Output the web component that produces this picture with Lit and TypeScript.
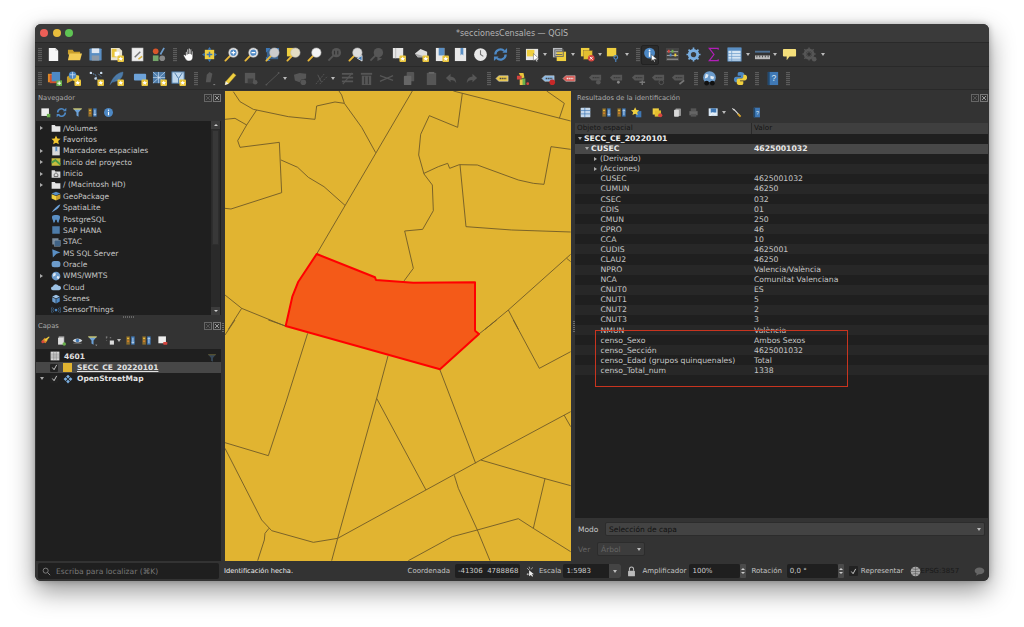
import { LitElement, html, css, svg } from "lit";
import { customElement } from "lit/decorators.js";

const star = svg`<rect x="9" y="9" width="7" height="7" rx="1" fill="#e9c53c"/><path d="M12.5 10l.8 1.7 1.7.2-1.3 1.1.4 1.7-1.6-.9-1.6.9.4-1.7-1.3-1.1 1.7-.2z" fill="#fff"/>`;
const mag = (inner: any = "", glass = "#e8e8e8") => svg`<path d="M7 9L1.5 14.5" stroke="#e9b93a" stroke-width="2" stroke-linecap="round"/><circle cx="10" cy="6" r="5" fill="${glass}" stroke="#bbb" stroke-width=".6"/>${inner}`;
const folder = (c: string) => svg`<path d="M1 3h5l1.5 2H15v9H1z" fill="${c}"/>`;
const dim = "#565656";
const lbl = (c: string, t = "#444") => svg`<path d="M1 8l3-3h10v6H4z" fill="${c}" stroke="#ddd" stroke-width=".5"/><path d="M5 8h7" stroke="${t}" stroke-width="1.6" stroke-dasharray="1.4 .6"/>`;
const dlbl = (extra: any = "") => svg`<path d="M1 7l3-3h10v6H4z" fill="${dim}"/><path d="M5 7h7" stroke="#3a3a3a" stroke-width="1.4" stroke-dasharray="1.4 .6"/>${extra}`;
const bars = (c1: string, c2: string) => svg`<rect x="2" y="2" width="5" height="12" fill="#8a6d2d"/><rect x="3" y="4" width="3" height="2" fill="#e9b93a"/><rect x="3" y="8" width="3" height="2" fill="#d9822b"/><rect x="9" y="2" width="5" height="12" fill="${c1}"/><path d="M11.5 4v8M9.5 ${c2 === "d" ? "10l2 2 2-2" : "6l2-2 2 2"}" stroke="#cfe2f5" stroke-width="1.2" fill="none"/>`;

const I: Record<string, any> = {
  new: svg`<path d="M3 1h7l3 3v11H3z" fill="#f6f6f6"/><path d="M10 1v3h3" fill="#ccc"/>`,
  open: svg`<path d="M1 3h5l1.5 2H14v3H1z" fill="#c99f2c"/><path d="M1 14l1.5-7H16l-2 7z" fill="#f3cc55"/>`,
  save: svg`<rect x="1.5" y="1.5" width="13" height="13" rx="1" fill="#5a8fc4"/><rect x="4" y="1.5" width="8" height="5" fill="#dfe8f2"/><rect x="4" y="9" width="8" height="5.5" fill="#8d9aa8"/>`,
  saveas: svg`<path d="M2 1h9l3 3v10H2z" fill="#e9e3cf"/><rect x="3" y="2" width="5" height="9" fill="#e9c53c"/><rect x="6" y="5" width="5" height="5" fill="#fff"/>${star}`,
  layout: svg`<rect x="2" y="1" width="12" height="14" fill="#eee" stroke="#999" stroke-width=".5"/><path d="M5 11l6-6" stroke="#777" stroke-width="1.6"/><path d="M9 13l4-3" stroke="#d6b13c" stroke-width="1.6"/>`,
  style: svg`<circle cx="5" cy="4.5" r="3" fill="#d9562b"/><path d="M10 8l4-7" stroke="#6d9ccb" stroke-width="1.8"/><rect x="2" y="9" width="6" height="6" fill="#74a56a"/><circle cx="12" cy="12" r="3" fill="#888"/>`,
  hand: svg`<path d="M4 9V5.5c0-1 1.4-1 1.5 0V8V3c0-1 1.5-1 1.5 0v4.5V2.2c0-1 1.6-1 1.6 0v5.3V3c0-1 1.5-1 1.5 0v5V5c0-1 1.4-1 1.4 0v6c0 2.500-1.500 4-4 4-2 0-3-1-4-2.500L1.800 9.500c-.6-1 .6-1.800 1.300-1z" fill="#fff" stroke="#222" stroke-width=".5"/>`,
  pansel: svg`<rect x="3" y="3" width="10" height="10" fill="#efcf3f"/><path d="M8 0l2 3H6zM8 16l-2-3h4zM0 8l3-2v4zM16 8l-3 2V6z" fill="#3f78b5"/><path d="M8 5v6M5 8h6" stroke="#3f78b5" stroke-width="1.6"/>`,
  zin: mag(svg`<circle cx="10" cy="6" r="3.300" fill="#4d88c4"/><path d="M8 6h4M10 4v4" stroke="#fff" stroke-width="1.100"/>`),
  zout: mag(svg`<circle cx="10" cy="6" r="3.300" fill="#4d88c4"/><path d="M8 6h4" stroke="#fff" stroke-width="1.200"/>`),
  zfull: svg`<path d="M1 1h5L1 6zM15 1v5l-5-5zM1 15v-5l5 5z" fill="#3f78b5"/><rect x="2" y="2" width="12" height="11" fill="#3f78b5" opacity=".7"/>${mag("", "#ccc")}`,
  zsel: svg`<rect x="1" y="1" width="7" height="9" fill="#efcf3f"/>${mag("", "#e3dcc3")}`,
  zlayer: mag("", "#f3f3f3"),
  znat: svg`<path d="M7 9L1.500 14.500" stroke="${dim}" stroke-width="2"/><circle cx="10" cy="6" r="5" fill="${dim}"/><path d="M8 4v4M11.500 4v4" stroke="#333" stroke-width="1.200"/>`,
  zlast: svg`${mag("", "#ddd")}<path d="M15 9l-5 3 5 3z" fill="#3f78b5" stroke="#fff" stroke-width=".8"/>`,
  znext: svg`<path d="M7 9L1.500 14.500" stroke="${dim}" stroke-width="2"/><circle cx="10" cy="6" r="5" fill="${dim}"/><path d="M9 10l5 2.500-5 2.500z" fill="${dim}"/>`,
  view: svg`<path d="M2 1h11v11H2z" fill="#e6e6e6"/><path d="M5 1v11" stroke="#bbb"/>${star}`,
  view3d: svg`<path d="M1 7l6-5 7 3v6H4z" fill="#ddd"/><path d="M1 7l3 4h10" fill="#aaa"/>${star}`,
  bm: svg`<rect x="2" y="1" width="9" height="14" fill="#e8e8e8"/><rect x="5" y="1" width="6" height="8" fill="#5a8fc4"/>${star}`,
  bm2: svg`<rect x="2" y="1" width="12" height="14" fill="#e8e8e8"/><path d="M8 1v8l1.500-1.500L11 9V1z" fill="#5a8fc4"/>`,
  clock: svg`<circle cx="8" cy="8" r="6.800" fill="#e8e8e8"/><path d="M8 3.500V8l3 2" stroke="#777" stroke-width="1.200" fill="none"/>`,
  refresh: svg`<path d="M2.500 8a5.500 5.500 0 0 1 9.500-3.700M13.500 8a5.500 5.500 0 0 1-9.500 3.700" stroke="#4d88c4" stroke-width="2.400" fill="none"/><path d="M10 6h5V1zM6 10H1v5z" fill="#4d88c4"/>`,
  select: svg`<rect x="1" y="2" width="13" height="12" fill="#e8e8e8"/><rect x="2" y="3" width="8" height="7" fill="#efcf3f"/><path d="M9 7v8l2-2 1.500 3 1-.5-1.500-3h3z" fill="#fff" stroke="#222" stroke-width=".4"/>`,
  attr: svg`<rect x="1" y="1" width="10" height="10" fill="#b9bcc0"/><rect x="5" y="5" width="10" height="10" fill="#efcf3f"/><rect x="3" y="3" width="9" height="7" fill="none" stroke="#666"/><path d="M4 5h7M4 8h7" stroke="#666"/>`,
  desel: svg`<rect x="1" y="1" width="9" height="9" fill="#efcf3f"/><rect x="4" y="4" width="9" height="9" fill="#e3be30" stroke="#8a6d2d" stroke-width=".5"/><circle cx="12" cy="12" r="3.500" fill="#d6453f"/><path d="M10.500 10.500l3 3M13.500 10.500l-3 3" stroke="#fff"/>`,
  value: svg`<rect x="2" y="1" width="10" height="9" fill="#efcf3f"/><circle cx="11.500" cy="11" r="2" fill="none" stroke="#4d88c4" stroke-width="1.200"/><path d="M11.500 13v3" stroke="#4d88c4" stroke-width="1.200"/>`,
  id: svg`<circle cx="7" cy="6.500" r="5.800" fill="#4d88c4"/><rect x="6.200" y="5.500" width="1.600" height="5" fill="#fff"/><circle cx="7" cy="3.700" r="1" fill="#fff"/><path d="M9 8v7l1.800-1.600 1.300 2.600.9-.4-1.200-2.600H15z" fill="#fff" stroke="#222" stroke-width=".4"/>`,
  proc: svg`<rect x="1" y="1" width="14" height="14" fill="#444"/><path d="M2 5h12M2 9h12M2 13h12" stroke="#aaa"/><rect x="3" y="3" width="2" height="3" fill="#d6453f"/><rect x="7" y="3" width="2" height="3" fill="#6ab04c"/><rect x="10" y="7" width="2" height="3" fill="#efcf3f"/><rect x="5" y="7" width="2" height="3" fill="#4d88c4"/>`,
  gear: svg`<circle cx="8" cy="8" r="4.500" fill="none" stroke="#79aee0" stroke-width="3"/><path d="M8 .5v15M.5 8h15M2.700 2.700l10.600 10.600M13.300 2.700L2.700 13.300" stroke="#79aee0" stroke-width="1.800"/><circle cx="8" cy="8" r="2.800" fill="#3a3a3a"/>`,
  sigma: svg`<path d="M13 3V1.500H3.500L8.500 8l-5 6.500H13V13" fill="none" stroke="#b21fb8" stroke-width="1.300"/>`,
  table: svg`<rect x="1" y="1" width="14" height="14" fill="#d7e6f4" stroke="#5a8fc4"/><rect x="1" y="1" width="14" height="3" fill="#5a8fc4"/><path d="M1 7h14M1 10h14M1 13h14M5 4v11" stroke="#6d9ccb" stroke-width=".8"/>`,
  ruler: svg`<rect x="0" y="4" width="16" height="2" fill="#4d6f92"/><rect x="0" y="9" width="16" height="4" fill="#bbb"/><path d="M2 9v2M5 9v2M8 9v2M11 9v2M14 9v2" stroke="#444"/>`,
  tip: svg`<path d="M2 2h12a1 1 0 0 1 1 1v6a1 1 0 0 1-1 1H8l-3 4v-4H2a1 1 0 0 1-1-1V3a1 1 0 0 1 1-1z" fill="#f5df7a"/>`,
  dgear: svg`<circle cx="7.500" cy="7.500" r="4.500" fill="none" stroke="${dim}" stroke-width="2.600"/><path d="M7.500 .5v14M.5 7.500h14M2.500 2.500l10 10M12.500 2.500l-10 10" stroke="${dim}" stroke-width="1.500"/><circle cx="7.500" cy="7.500" r="2" fill="#333"/><circle cx="13" cy="13" r="2.500" fill="${dim}"/>`,
  dsm: svg`<rect x="1" y="3" width="8" height="9" fill="#e08a2a"/><rect x="3" y="4" width="8" height="9" fill="#d0502a" /><rect x="5" y="1" width="9" height="10" fill="#4d88c4"/><rect x="10" y="10" width="6" height="6" fill="#6ab04c"/><path d="M13 11v4M11 13h4" stroke="#fff"/>`,
  gpkg: svg`<path d="M1 6l6-3v7l-6 3z" fill="#c99f2c"/><path d="M7 3l7 2v7l-7-2z" fill="#efcf3f"/><circle cx="7" cy="4.500" r="4" fill="#4d88c4"/><path d="M4 4h6M7 1v7" stroke="#cfe2f5" stroke-width=".8"/>${star}`,
  vec: svg`<path d="M2 2l5 2 2 6M10 3l3 3" stroke="#6d9ccb" stroke-dasharray="1.500 1" fill="none"/><circle cx="2" cy="2" r="1.300" fill="#cde"/><circle cx="13" cy="2" r="1.300" fill="#cde"/><circle cx="7" cy="8" r="1.300" fill="#cde"/>${star}`,
  feather: svg`<path d="M1 15C3 8 8 2 15 1c0 5-3 9-8 10l-3 1 5-6" fill="#4d7ba8" stroke="#4d7ba8" stroke-width=".4"/>${star}`,
  virt: svg`<rect x="1" y="3" width="13" height="7" rx="1" fill="#6da2d8"/>${star}`,
  mesh: svg`<rect x="1" y="1" width="13" height="12" fill="#4d7ba8"/><path d="M1 7h13M7 1v12M1 1l13 12M14 1L1 13" stroke="#cfe2f5" stroke-width=".7"/>${star}`,
  tmesh: svg`<rect x="1" y="1" width="13" height="12" fill="#c0d8ee" stroke="#4d7ba8"/><path d="M4 2l4 6 4-6M8 8v5" stroke="#4d7ba8" fill="none"/>${star}`,
  dedit: svg`<path d="M3 12l1-8 3-3 3 2-2 9z" fill="${dim}"/><path d="M11 14.500l2 0" stroke="#888"/>`,
  pencil: svg`<path d="M2 15l1-4 8-9 3 2.500-8 9z" fill="#efcf3f" stroke="#8a6d2d" stroke-width=".4"/><path d="M2 15l1-4 3 2.500z" fill="#eee"/>`,
  dsave: svg`<rect x="2" y="2" width="11" height="11" fill="${dim}"/><rect x="5" y="8" width="6" height="5" fill="#3e3e3e"/><circle cx="13" cy="12" r="2.500" fill="${dim}"/>`,
  dline: svg`<path d="M1 15L15 2" stroke="${dim}"/><circle cx="1.500" cy="14.500" r="1" fill="${dim}"/><circle cx="14.500" cy="2" r="1" fill="${dim}"/>`,
  dpoly: svg`<path d="M1 4l6-2 7 1v5l-5 1-2 3-5-2z" fill="${dim}"/><circle cx="11" cy="12" r="3" fill="${dim}"/>`,
  dmove: svg`<path d="M2 14L11 3M6 14l8-8" stroke="${dim}" stroke-dasharray="2 1"/><path d="M4 4l4 8" stroke="${dim}"/>`,
  dlist: svg`<path d="M2 3h12M2 7h12M2 11h12" stroke="${dim}" stroke-width="1.800"/><path d="M3 14L13 2" stroke="${dim}" stroke-width="1.200"/>`,
  dtrash: svg`<rect x="2" y="2" width="12" height="2" fill="${dim}"/><rect x="3" y="5" width="10" height="10" fill="${dim}"/><path d="M6 6v8M10 6v8" stroke="#333"/>`,
  dcut: svg`<path d="M1 5l14 5M1 11l14-6" stroke="${dim}" stroke-width="1.400"/>`,
  dcopy: svg`<rect x="5" y="1" width="8" height="10" rx="1" fill="${dim}"/><rect x="2" y="5" width="8" height="10" rx="1" fill="#666"/>`,
  dpage: svg`<rect x="3" y="2" width="10" height="13" fill="${dim}"/><rect x="5" y="1" width="6" height="2" fill="#666"/>`,
  undo: svg`<path d="M7 3L2 7.500 7 12V9.500c3 0 5 1 6 3.500 0-4.500-2-7-6-7z" fill="${dim}"/>`,
  redo: svg`<path d="M9 3l5 4.500L9 12V9.500c-3 0-5 1-6 3.500 0-4.500 2-7 6-7z" fill="${dim}"/>`,
  lab: lbl("#e8c74a"),
  labc: svg`<path d="M3 2h5l1 5-3 1z" fill="#e9c53c"/><path d="M1 5h5v4H1z" fill="#d6453f"/><path d="M6 8h4v7H6z" fill="#6ab04c"/><path d="M4 9h3v6H4z" fill="#e8c74a"/><circle cx="12.500" cy="13.500" r="1.500" fill="#d6453f"/>`,
  labb: svg`${lbl("#8db9e2")}<circle cx="12" cy="12" r="3" fill="#c62828"/>`,
  labr: lbl("#d85a55", "#eee"),
  dl1: dlbl(svg`<circle cx="11" cy="12" r="2.500" fill="${dim}"/>`),
  dl2: dlbl(svg`<circle cx="10" cy="12" r="1.500" fill="#888"/>`),
  dl3: dlbl(svg`<path d="M9 12h6M12 10v5" stroke="#777" stroke-width="1.500"/>`),
  dl4: dlbl(svg`<circle cx="11" cy="12" r="2.500" fill="none" stroke="${dim}"/>`),
  dl5: dlbl(svg`<path d="M9 14l5-4" stroke="#777" stroke-width="2"/>`),
  globe: svg`<circle cx="8" cy="7" r="6.800" fill="#6b9bcb"/><path d="M4 3l3 1-1 3-3 1zM9 5l4 1-1 3-3-1z" fill="#e3ecf5"/><circle cx="5" cy="13" r="2.500" fill="#111"/><circle cx="11" cy="13" r="2.500" fill="#111"/><rect x="6" y="12" width="4" height="1.500" fill="#111"/>`,
  python: svg`<path d="M8 1C5 1 5 2 5 3.500V5h3.500v1H3.500C2 6 1 7 1 9s1 3 2.500 3H5v-2c0-1 1-2 2-2h3c1 0 2-1 2-2V3.500C12 2 11 1 8 1z" fill="#4d88c4"/><path d="M8 15c3 0 3-1 3-2.500V11H7.500v-1h5c1.500 0 2.500-1 2.500-3s-1-3-2.500-3H11v2c0 1-1 2-2 2H6c-1 0-2 1-2 2v2.500C4 14 5 15 8 15z" fill="#efcf3f"/>`,
  help: svg`<rect x="3" y="1" width="11" height="14" fill="#3f78b5"/><rect x="3" y="1" width="2" height="14" fill="#21496e"/><text x="9.500" y="11" font-size="9" fill="#dce9f5" text-anchor="middle" font-family="Liberation Sans">?</text>`,
  addbm: svg`<rect x="2" y="2" width="11" height="11" fill="#eee"/><rect x="10" y="10" width="5" height="5" fill="#6ab04c"/>`,
  filter: svg`<path d="M1.500 2h13L9.500 8v6l-3-1.500V8z" fill="#6da2d8"/><path d="M1.500 2h13l-1 1.500h-11z" fill="#efcf3f"/>`,
  bars1: bars("#3f78b5", "d"),
  bars2: bars("#3f78b5", "u"),
  info: svg`<circle cx="8" cy="8" r="6.500" fill="#4d88c4"/><rect x="7.200" y="7" width="1.600" height="5" fill="#fff"/><circle cx="8" cy="4.700" r="1" fill="#fff"/>`,
  lstyle: svg`<path d="M2 9l5-5 4 4-3 4z" fill="#d9822b"/><path d="M6 7l7-5 1 1-5 6z" fill="#efcf3f"/><circle cx="4" cy="10" r="2" fill="#d6453f"/>`,
  addgrp: svg`<rect x="4" y="2" width="8" height="11" fill="#aaa"/><rect x="3" y="4" width="8" height="10" fill="#ddd"/><circle cx="12" cy="13" r="2.500" fill="#6ab04c"/>`,
  eye: svg`<path d="M1 8c3-4 11-4 14 0-3 4-11 4-14 0z" fill="#cfd6dc"/><circle cx="8" cy="8" r="2.500" fill="#3f78b5"/><path d="M2 12h12" stroke="#888"/>`,
  lfilter: svg`<path d="M1.500 2h13L9.500 8v6l-3-1.500V8z" fill="#6da2d8"/><path d="M1.500 2h13l-1 1.500h-11z" fill="#efcf3f"/><path d="M12 14h3l-1.500 1.500z" fill="#ccc"/>`,
  expr: svg`<path d="M3 3l1 0M2 8l1 0" stroke="#888"/><rect x="7" y="8" width="6" height="6" fill="#ddd"/><path d="M2 2v3M7 4h2" stroke="#aaa"/>`,
  rmlayer: svg`<rect x="2" y="2" width="11" height="10" fill="#eee"/><rect x="9" y="10" width="6" height="4" rx="1" fill="#d6453f"/>`,
  rlist: svg`<rect x="1" y="1" width="14" height="14" rx="1" fill="#c6d9ec"/><path d="M1 5h14M1 10h14M7 1v14" stroke="#3f78b5"/>`,
  rstar: svg`<rect x="7" y="6" width="8" height="9" fill="#3f78b5"/><path d="M6 .5l2 3.800 4 .5-3 2.800.8 4.200L6 9.800 2.200 11.800 3 7.600 0 4.800l4-.5z" fill="#efcf3f"/>`,
  rsel: svg`<rect x="1" y="2" width="9" height="9" fill="#efcf3f"/><rect x="4" y="5" width="9" height="9" fill="#e3be30"/><circle cx="12" cy="12" r="3" fill="#d6453f"/>`,
  rcopy: svg`<rect x="5" y="2" width="8" height="11" rx="1" fill="#999"/><rect x="3" y="4" width="7" height="10" rx="1" fill="#d8d8d8"/>`,
  rprint: svg`<rect x="4" y="2" width="8" height="4" fill="${dim}"/><rect x="2" y="6" width="12" height="6" fill="#666"/><rect x="4" y="10" width="8" height="4" fill="${dim}"/>`,
  rview: svg`<rect x="1" y="2" width="13" height="11" fill="#d7e6f4"/><rect x="4" y="2" width="8" height="6" fill="#3f78b5"/><path d="M3 13l4-5 3 3 2-2" stroke="#fff" fill="none"/>`,
  wrench: svg`<path d="M2 2l3 3M4 3l9 10" stroke="#ddd" stroke-width="1.500"/><path d="M10 10l4 4" stroke="#d9a52b" stroke-width="2.500"/>`,
  rhelp: svg`<rect x="4" y="1" width="9" height="14" fill="#3f78b5"/><rect x="4" y="1" width="2" height="14" fill="#21496e"/><text x="9.500" y="11" font-size="8" fill="#dce9f5" text-anchor="middle" font-family="Liberation Sans">?</text>`,
  nfolder: folder("#e5e5e5"),
  nstar: svg`<path d="M8 .8l2.200 4.700 5.100.6-3.800 3.500 1 5.100L8 12.200l-4.500 2.500 1-5.100L.7 6.100l5.100-.6z" fill="#f1c62f"/>`,
  nbm: svg`<rect x="2" y="1" width="12" height="14" fill="#d9d9d9"/><path d="M7 1v8l1.500-1.500L10 9V1z" fill="#5a8fc4"/>`,
  nproj: svg`<rect x="1" y="2" width="14" height="12" fill="#c9bc3f"/><path d="M1 9l6-4 8 7" stroke="#4c9a45" stroke-width="3" fill="none"/>`,
  nhome: svg`<path d="M1 2h5l1 2h8v10H1z" fill="#ddd"/><path d="M8 6l3 2.500V12H5V8.500z" fill="none" stroke="#333"/>`,
  ngpkg: svg`<path d="M8 1l7 3-7 3-7-3z" fill="#5a8fc4"/><path d="M1 5l7 3v7l-7-3z" fill="#efcf3f"/><path d="M15 5l-7 3v7l7-3z" fill="#c99f2c"/>`,
  nspat: svg`<path d="M1 15C5 9 10 4 15 2c-1 4-4 8-9 10z" fill="#6da2d8"/>`,
  npg: svg`<path d="M2 3c2-2 10-2 12 0 1 2 0 5-1 7l-1 4-2-1-1-4H7l-1 4-2 1-1-4C2 8 1 5 2 3z" fill="#5a8fc4"/>`,
  nhana: svg`<rect x="2" y="2" width="12" height="12" fill="#4d7ba8"/>`,
  nstac: svg`<rect x="2" y="2" width="10" height="10" fill="#7a8b9c"/><rect x="5" y="5" width="10" height="10" fill="#3f6285" stroke="#bbb" stroke-width=".5"/>`,
  nms: svg`<path d="M2 2l13 5-6 2-6 6z" fill="#5a8fc4"/>`,
  nora: svg`<rect x="1" y="3" width="14" height="10" rx="4" fill="#6d9ccb"/>`,
  nwms: svg`<circle cx="8" cy="8" r="7" fill="#6d9ccb"/><path d="M4 3l4 1-1 3-4 2zM10 8l4 1-2 4-3-2z" fill="#e3ecf5"/>`,
  ncloud: svg`<path d="M3 13a3 3 0 0 1 0-6 5 5 0 0 1 9-1 3.500 3.500 0 0 1 1 7z" fill="#9cc1e4"/>`,
  nscene: svg`<path d="M8 1l6 3-6 3-6-3z" fill="#9cc1e4"/><path d="M2 5l5.500 3v7L2 12z" fill="#6d9ccb"/><path d="M14 5L8.500 8v7l5.500-3z" fill="#4d88c4"/>`,
  nsens: svg`<circle cx="8" cy="8" r="2.200" fill="#4d88c4"/><path d="M4.500 4.500a5 5 0 0 0 0 7M11.500 4.500a5 5 0 0 1 0 7M2 3a8 8 0 0 0 0 10M14 3a8 8 0 0 1 0 10" stroke="#4d7ba8" fill="none"/>`,
  attrt: svg`<rect x="1" y="1" width="14" height="14" fill="#d8d8d8"/><path d="M1 5h14M1 8h14M1 11h14M6 1v14M10 1v14" stroke="#777" stroke-width=".8"/>`,
  osm: svg`<path d="M8 1l3 3-3 3-3-3zM4 5l3 3-3 3-3-3zM12 5l3 3-3 3-3-3zM8 9l3 3-3 3-3-3z" fill="#79aee0"/>`,
  search: svg`<circle cx="6.500" cy="6.500" r="4.500" fill="none" stroke="#999" stroke-width="1.300"/><path d="M10 10l4.500 4.500" stroke="#999" stroke-width="1.500"/>`,
  cursor: svg`<path d="M3 3l3 3M6 1l1 3M11 2L9 5" stroke="#ccc"/><path d="M6 6v9l2.500-2 2 2.500 1.200-1-2-2.500H13z" fill="#eee"/><circle cx="4" cy="12" r="1.500" fill="#aaa"/>`,
  lock: svg`<path d="M5 7V4.500a3 3 0 0 1 6 0V7" stroke="#bbb" stroke-width="1.500" fill="none"/><rect x="3" y="7" width="10" height="8" rx="1" fill="#bbb"/>`,
  crs: svg`<circle cx="8" cy="8" r="7" fill="#a9a9a9"/><path d="M1 8h14M8 1v14M3 3.500c3 2 7 2 10 0M3 12.500c3-2 7-2 10 0" stroke="#555" stroke-width=".8" fill="none"/>`,
  msg: svg`<path d="M8 2c4 0 7 2 7 5s-3 5-7 5l-1 0-4 2 1-3C2 10 1 8.500 1 7c0-3 3-5 7-5z" fill="#666"/>`,
};

const ic = (n: string) => html`<svg class="ic" viewBox="0 0 16 16">${I[n]}</svg>`;

type Tool = [string, number];
// Toolbar entries: [icon or "|" (grip) or "v" (menu arrow) or "*name" (checked button), centre x on the page]
const TB1: Tool[] = [["|",40],["new",53],["open",74],["save",95],["saveas",116],["layout",137],["style",158],["|",175],["hand",189],["pansel",209],["zin",231],["zout",251],["zfull",272],["zsel",293],["zlayer",314],["znat",334],["zlast",355],["znext",376],["view",398],["view3d",421],["bm",441],["bm2",460],["clock",480],["refresh",500],["|",518],["select",532],["v",545],["attr",560],["v",574],["desel",589],["v",602],["value",615],["v",630],["|",642],["*id",654],["proc",676],["gear",697],["sigma",717],["table",738],["v",752],["ruler",767],["v",780],["tip",795],["dgear",815],["v",829]];
const TB2: Tool[] = [["|",40],["dsm",54],["gpkg",73],["vec",96],["feather",116],["virt",140],["mesh",159],["tmesh",178],["|",196],["dedit",210],["pencil",230],["dsave",250],["dline",272],["v",285],["dpoly",301],["dmove",322],["v",334],["dlist",349],["dtrash",368],["dcut",388],["dcopy",411],["dpage",433],["undo",453],["redo",473],["|",491],["lab",504],["labc",525],["labb",550],["labr",571],["dl1",597],["dl2",618],["dl3",640],["dl4",660],["dl5",680],["|",698],["globe",711],["|",728],["python",742],["|",759],["help",774],["|",790]];
const NAVT: Tool[] = [["addbm",45],["refresh",61],["filter",77],["bars1",92],["info",108]];
const LAYT: Tool[] = [["lstyle",45],["addgrp",61],["eye",77],["lfilter",92],["expr",110],["v",119],["bars1",131],["bars2",147],["rmlayer",163]];
const RES: Tool[] = [["rlist",585],["bars1",606],["bars2",621],["rstar",636],["rsel",657],["rcopy",677],["rprint",693],["rview",713],["v",724],["wrench",737],["rhelp",757]];

const NAV: [string, string, boolean][] = [["/Volumes","nfolder",true],["Favoritos","nstar",false],["Marcadores espaciales","nbm",true],["Inicio del proyecto","nproj",true],["Inicio","nhome",true],["/ (Macintosh HD)","nfolder",true],["GeoPackage","ngpkg",false],["SpatiaLite","nspat",false],["PostgreSQL","npg",false],["SAP HANA","nhana",false],["STAC","nstac",false],["MS SQL Server","nms",false],["Oracle","nora",false],["WMS/WMTS","nwms",true],["Cloud","ncloud",false],["Scenes","nscene",false],["SensorThings","nsens",false]];

const ATTRS: [string, string][] = [["CUSEC","4625001032"],["CUMUN","46250"],["CSEC","032"],["CDIS","01"],["CMUN","250"],["CPRO","46"],["CCA","10"],["CUDIS","4625001"],["CLAU2","46250"],["NPRO","Valencia/València"],["NCA","Comunitat Valenciana"],["CNUT0","ES"],["CNUT1","5"],["CNUT2","2"],["CNUT3","3"],["NMUN","València"],["censo_Sexo","Ambos Sexos"],["censo_Sección","4625001032"],["censo_Edad (grupos quinquenales)","Total"],["censo_Total_num","1338"]];

// Boundaries read from two 3x crops of the map, in crop coordinates.
const L1 = ["25,5 45,35 85,58 190,80 270,88 275,48 330,36 358,40 350,15 342,3","95,60 65,105 38,152 45,172 163,157 170,308 18,357 0,355","0,88 30,85 65,105","168,210 218,232 250,262 297,290 360,346","358,40 410,112 452,188","562,3 275,492","685,3 1037,93","965,3 1018,40 1003,85","712,10 698,112 613,77 587,133 581,195 597,252 622,285 625,362 593,418 539,423 565,535 537,573","597,250 640,230 668,220 674,235 703,224 757,225 880,270 925,280 957,283 978,170 1037,178","705,224 723,410 860,420 1037,426","1037,493 850,660 780,718","1025,505 1037,515","850,660 880,718","0,615 50,655 180,708","50,655 10,718"];
const L2 = ["130,0 182,18","30,0 0,45","815,0 762,42","248,40 185,240 130,407 0,368","0,385 110,600 140,632 265,667 338,655 767,420 1037,275","489,108 455,235 338,655 320,722","455,235 603,510","645,150 752,430","767,420 960,476 1037,497","960,476 925,625 1037,695","688,466 700,505 757,630 795,722","550,722 682,650 757,630 880,596 925,625","132,625 120,640 118,660 98,722","865,0 943,145 1037,95","1017,285 1037,320"];
const HL = "91.7,164 150,187.3 151,190 188.3,192.7 250,192.3 250,240 250.3,241 254,244 215,279.3 60.7,236 67.3,206.7 73.3,191.7";

@customElement("app-root")
export class AppRoot extends LitElement {
  static styles = css`
    :host { display: block; width: 1024px; height: 627px; background: #fff; box-sizing: border-box; padding: 24px 35px 46px; font-family: "DejaVu Sans", sans-serif; font-size: 7.500px; color: #c8c8c8; overflow: hidden; }
    .win { height: 557px; border-radius: 6px; background: #333; box-shadow: 0 10px 26px rgba(0,0,0,.42), 0 0 6px rgba(0,0,0,.25); display: flex; flex-direction: column; overflow: hidden; }
    .title { height: 18px; flex: none; background: #3a3a3a; display: flex; align-items: center; justify-content: center; position: relative; font-size: 8px; color: #b4b4b4; }
    .lights { position: absolute; left: 0; top: 0; height: 18px; padding-left: 5px; display: flex; gap: 4.600px; align-items: center; }
    .lights i { width: 8px; height: 8px; border-radius: 50%; }
    .lights .r { background: #ec5f57; }
    .lights .y { background: #e8bd3c; }
    .lights .g { background: #5fc454; }
    .tb { height: 24px; flex: none; background: #333; border-top: 1px solid #292929; box-sizing: border-box; display: flex; align-items: center; }
    .slot { flex: none; width: 16px; height: 16px; display: flex; align-items: center; justify-content: center; position: relative; }
    .ic { width: 15px; height: 15px; flex: none; display: block; }
    .slot.on::before { content: ""; position: absolute; inset: -2px -1px; border: 1px solid #222; border-radius: 2px; background: #2b2b2b; }
    .slot.on .ic { position: relative; }
    .grip { flex: none; width: 4px; height: 14px; background: repeating-linear-gradient(#5c5c5c 0 1px, #3a3a3a 1px 2px); }
    .caret { flex: none; width: 0; height: 0; border: 2.500px solid transparent; border-top: 3px solid #bbb; border-bottom: 0; }
    .main { flex: 1; min-height: 0; display: grid; grid-template-columns: 185px 346px 413px; column-gap: 4px; padding: 1px 1px 0; position: relative; border-top: 1px solid #292929; margin-top: -1px; }
    .dock { display: flex; flex-direction: column; min-height: 0; background: #333; }
    .dhead { flex: none; height: 13px; display: flex; align-items: center; justify-content: space-between; padding: 0 0 0 2px; font-size: 6.750px; color: #aaa; }
    .dbtn { display: flex; gap: 1px; }
    .dbtn svg { width: 8px; height: 8px; display: block; }
    .dtools { flex: none; height: 17px; display: flex; align-items: center; }
    .dtools .ic { width: 11px; height: 11px; }
    .navbody { height: 194px; flex: none; display: flex; background: #1f1f1f; }
    .navlist { flex: 1; padding-top: 1.500px; }
    .nrow { height: 11.360px; display: flex; align-items: center; white-space: nowrap; }
    .arrow { flex: none; width: 5px; height: 5px; margin-left: 3px; display: flex; align-items: center; justify-content: center; }
    .arrow.r::before { content: ""; border: 2.200px solid transparent; border-left: 3px solid #aaa; border-right: 0; }
    .arrow.d::before { content: ""; border: 2.200px solid transparent; border-top: 3px solid #aaa; border-bottom: 0; }
    .nrow .ic { width: 10px; height: 10px; margin: 0 2px 0 7px; }
    .sb { flex: none; width: 9px; margin-right: 1px; background: #2a2a2a; display: flex; flex-direction: column; align-items: stretch; }
    .sbb { height: 8px; background: #3c3c3c; display: flex; align-items: center; justify-content: center; font-size: 0; }
    .sbb::before { content: ""; border: 2px solid transparent; }
    .sbb.u::before { border-bottom: 2.500px solid #ccc; border-top: 0; }
    .sbb.n::before { border-top: 2.500px solid #ccc; border-bottom: 0; }
    .thumb { height: 115px; background: #383838; border: 1px solid #2e2e2e; box-sizing: border-box; margin: 1px 1px 0; }
    .sbt { flex: 1; }
    .hsplit { flex: none; height: 4px; display: flex; justify-content: center; align-items: center; }
    .hsplit i { width: 12px; height: 2px; background: repeating-linear-gradient(90deg, #666 0 1px, #333 1px 2px); }
    .laybody { flex: 1; background: #1f1f1f; padding-top: 1.500px; }
    .lrow { height: 11.400px; display: flex; align-items: center; white-space: nowrap; color: #e2e2e2; font-weight: bold; position: relative; font-size: 7.500px; }
    .lrow.sel { background: #474747; }
    .chk { flex: none; width: 8px; height: 8px; box-sizing: border-box; margin-left: 14px; background: #222; border-radius: 1px; display: flex; align-items: center; justify-content: center; }
    .chk.osmchk { margin-left: 6px; }
    .chk svg { width: 7px; height: 7px; }
    .lrow .ic { width: 10px; height: 10px; margin: 0 4px 0 5px; }
    .lrow .first { margin: 0 4px 0 14px; }
    .sw { flex: none; width: 9px; height: 9px; margin: 0 5px 0 5px; background: #e1b431; }
    .u { text-decoration: underline; }
    .lrow .lfilter { position: absolute; right: 4px; top: 2px; margin: 0; opacity: .3; }
    .map { background: #e1b431; height: 470px; min-width: 0; position: relative; }
    .map svg { display: block; width: 346px; height: 470px; }
    .vgrip { position: absolute; left: 347.500px; top: 230px; width: 2px; height: 12px; background: repeating-linear-gradient(#6a6a6a 0 1px, #333 1px 2px); }
    .vgrip.l { left: -3px; top: 232px; height: 10px; }
    .thead { flex: none; height: 10.500px; background: #3f3f3f; display: grid; grid-template-columns: 176px 1fr; color: #151515; font-size: 7.200px; line-height: 10.500px; margin-top: 2px; }
    .thead span { padding-left: 2px; }
    .thead span + span { border-left: 1px solid #2a2a2a; padding-left: 2px; }
    .tree { flex: none; height: 384.500px; background: #1f1f1f; position: relative; }
    .row { height: 10.080px; display: grid; grid-template-columns: 179px 1fr; align-items: center; white-space: nowrap; font-size: 7.700px; color: #c6c6c6; }
    .row:nth-child(even) { background: #272727; }
    .row.hl { background: #484848; color: #e8e8e8; font-weight: bold; }
    .row.b { color: #eee; font-weight: bold; }
    .cell { display: flex; align-items: center; min-width: 0; }
    .ind0 { padding-left: 2px; }
    .ind1 { padding-left: 9px; }
    .ind2 { padding-left: 18px; }
    .ind3 { padding-left: 25.500px; }
    .row .arrow { margin: 0 2px 0 0; }
    .redbox { position: absolute; left: 20px; top: 196.500px; width: 251px; height: 55px; border: 1.300px solid #c8341f; }
    .form { flex: 1; display: flex; flex-direction: column; padding: 4px 3px 0 3px; gap: 6px; }
    .frow { display: flex; align-items: center; gap: 4px; }
    .frow label { width: 23px; flex: none; color: #c8c8c8; font-size: 7.500px; }
    .frow label.off { color: #646464; width: 15px; }
    .combo { flex: 1; height: 14px; box-sizing: border-box; background: #434343; border: 1px solid #2c2c2c; border-radius: 2px; color: #111; display: flex; align-items: center; justify-content: space-between; padding: 0 3px 0 3px; }
    .combo.off { flex: none; width: 48px; color: #666; background: #3c3c3c; }
    .status { height: 20px; flex: none; background: #333; display: flex; align-items: center; padding-left: 3px; font-size: 7px; color: #c4c4c4; white-space: nowrap; }
    .field { flex: none; height: 14px; box-sizing: border-box; background: #1f1f1f; border-radius: 2px; display: flex; align-items: center; padding: 0 3px; color: #ccc; }
    .search { width: 181px; color: #777; font-size: 7.600px; gap: 5px; height: 16px; padding-left: 4px; }
    .search .ic { width: 9px; height: 9px; }
    .msg { width: 188.500px; flex: none; padding-left: 5px; box-sizing: border-box; color: #eee; font-size: 6.650px; }
    .coord { width: 65px; margin-left: 5px; }
    .st { flex: none; }
    .small { width: 11px; height: 11px; flex: none; }
    .cmb { width: 58px; margin-left: 2px; padding-right: 0; justify-content: space-between; }
    .cmb b { width: 12px; height: 14px; background: #444; border-radius: 0 2px 2px 0; display: flex; align-items: center; justify-content: center; font-weight: normal; }
    .spin { width: 6px; height: 14px; flex: none; background: #4a4a4a; border-radius: 1px; display: flex; flex-direction: column; align-items: center; justify-content: center; gap: 2px; }
    .spin::before { content: ""; border: 2px solid transparent; border-bottom: 2.500px solid #ccc; border-top: 0; }
    .spin::after { content: ""; border: 2px solid transparent; border-top: 2.500px solid #ccc; border-bottom: 0; }
    .crs { color: #191919; }
    .status .chk { margin-left: 5px; width: 9px; height: 10px; }
    .w51 { width: 51px; }
    .m3 { margin-left: 3px; }
    .m5 { margin-left: 5px; }
    .m6 { margin-left: 6px; }
    .m15 { margin-left: 15px; }
  `;

  tools(list: Tool[], origin: number) {
    let cur = origin;
    return list.map(([n, x]) => {
      const w = n === "|" ? 4 : n === "v" ? 5 : 16;
      const m = x - w / 2 - cur;
      cur = x + w / 2;
      const style = `margin-left:${m}px`;
      if (n === "|") return html`<span class="grip" style=${style}></span>`;
      if (n === "v") return html`<span class="caret" style=${style}></span>`;
      const on = n[0] === "*";
      return html`<span class="slot ${on ? "on" : ""}" style=${style}>${ic(on ? n.slice(1) : n)}</span>`;
    });
  }

  dbtns() {
    return html`<span class="dbtn">
      <svg viewBox="0 0 8 8"><rect x=".5" y=".5" width="7" height="7" fill="none" stroke="#666"/><path d="M2 2l4 4M6 2L2 6" stroke="#555"/></svg>
      <svg viewBox="0 0 8 8"><rect x=".5" y=".5" width="7" height="7" fill="none" stroke="#777"/><path d="M2 2l4 4M6 2L2 6" stroke="#999"/></svg>
    </span>`;
  }

  check() {
    return html`<svg viewBox="0 0 8 8"><path d="M1.500 4l2 2.500L6.500 1" fill="none" stroke="#ddd"/></svg>`;
  }

  render() {
    const lines = (arr: string[]) => arr.map((p) => svg`<polyline points=${p} fill="none" stroke="#6f5a28" stroke-width=".9" vector-effect="non-scaling-stroke"/>`);
    return html`<div class="win">
      <div class="title">
        <span class="lights"><i class="r"></i><i class="y"></i><i class="g"></i></span>
        *seccionesCensales — QGIS
      </div>
      <div class="tb">${this.tools(TB1, 35)}</div>
      <div class="tb">${this.tools(TB2, 35)}</div>
      <div class="main">
        <section class="dock">
          <div class="dhead"><span>Navegador</span>${this.dbtns()}</div>
          <div class="dtools">${this.tools(NAVT, 36)}</div>
          <div class="navbody">
            <div class="navlist">
              ${NAV.map(([t, i, a]) => html`<div class="nrow"><span class="arrow ${a ? "r" : ""}"></span>${ic(i)}<span>${t}</span></div>`)}
            </div>
            <div class="sb"><div class="sbb u"></div><div class="thumb"></div><div class="sbt"></div><div class="sbb n"></div></div>
          </div>
          <div class="hsplit"><i></i></div>
          <div class="dhead"><span>Capas</span>${this.dbtns()}</div>
          <div class="dtools">${this.tools(LAYT, 36)}</div>
          <div class="laybody">
            <div class="lrow"><svg class="ic first" viewBox="0 0 16 16">${I.attrt}</svg><span>4601</span><svg class="ic lfilter" viewBox="0 0 16 16">${I.filter}</svg></div>
            <div class="lrow sel"><span class="chk">${this.check()}</span><span class="sw"></span><span class="u">SECC_CE_20220101</span></div>
            <div class="lrow"><span class="arrow d"></span><span class="chk osmchk">${this.check()}</span>${ic("osm")}<span>OpenStreetMap</span></div>
          </div>
        </section>
        <div class="map">
          <svg viewBox="0 0 346 470">
            <g transform="translate(0 -1) scale(.33333)">${lines(L1)}</g>
            <g transform="translate(0 229) scale(.33333)">${lines(L2)}</g>
            <polygon transform="translate(0 -1)" points=${HL} fill="#f45a18" stroke="#ff0000" stroke-width="2" stroke-linejoin="round"/>
          </svg>
          <span class="vgrip"></span><span class="vgrip l"></span>
        </div>
        <section class="dock">
          <div class="dhead"><span>Resultados de la identificación</span>${this.dbtns()}</div>
          <div class="dtools">${this.tools(RES, 575)}</div>
          <div class="thead"><span>Objeto espacial</span><span>Valor</span></div>
          <div class="tree">
            <div class="row b"><span class="cell ind0"><span class="arrow d"></span><span>SECC_CE_20220101</span></span><span></span></div>
            <div class="row hl"><span class="cell ind1"><span class="arrow d"></span><span>CUSEC</span></span><span>4625001032</span></div>
            <div class="row"><span class="cell ind2"><span class="arrow r"></span><span>(Derivado)</span></span><span></span></div>
            <div class="row"><span class="cell ind2"><span class="arrow r"></span><span>(Acciones)</span></span><span></span></div>
            ${ATTRS.map(([k, v]) => html`<div class="row"><span class="cell ind3">${k}</span><span>${v}</span></div>`)}
            <div class="redbox"></div>
          </div>
          <div class="form">
            <div class="frow"><label>Modo</label><span class="combo"><span>Selección de capa</span><span class="caret"></span></span></div>
            <div class="frow"><label class="off">Ver</label><span class="combo off"><span>Árbol</span><span class="caret"></span></span></div>
          </div>
        </section>
      </div>
      <div class="status">
        <span class="field search">${ic("search")}<span>Escriba para localizar (⌘K)</span></span>
        <span class="msg">Identificación hecha.</span>
        <span class="st">Coordenada</span>
        <span class="field coord">-41306&nbsp; 4788868</span>
        <svg class="ic small m5" viewBox="0 0 16 16">${I.cursor}</svg>
        <span class="st m3">Escala</span>
        <span class="field cmb"><span>1:5983</span><b><span class="caret"></span></b></span>
        <svg class="ic small m5" viewBox="0 0 16 16">${I.lock}</svg>
        <span class="st m5">Amplificador</span>
        <span class="field m3 w51">100%</span><span class="spin"></span>
        <span class="st m5">Rotación</span>
        <span class="field m5 w51">0,0 °</span><span class="spin"></span>
        <span class="chk">${this.check()}</span>
        <span class="st m3">Representar</span>
        <svg class="ic small m6" viewBox="0 0 16 16">${I.crs}</svg>
        <span class="st crs">EPSG:3857</span>
        <svg class="ic small m15" viewBox="0 0 16 16">${I.msg}</svg>
      </div>
    </div>`;
  }
}
